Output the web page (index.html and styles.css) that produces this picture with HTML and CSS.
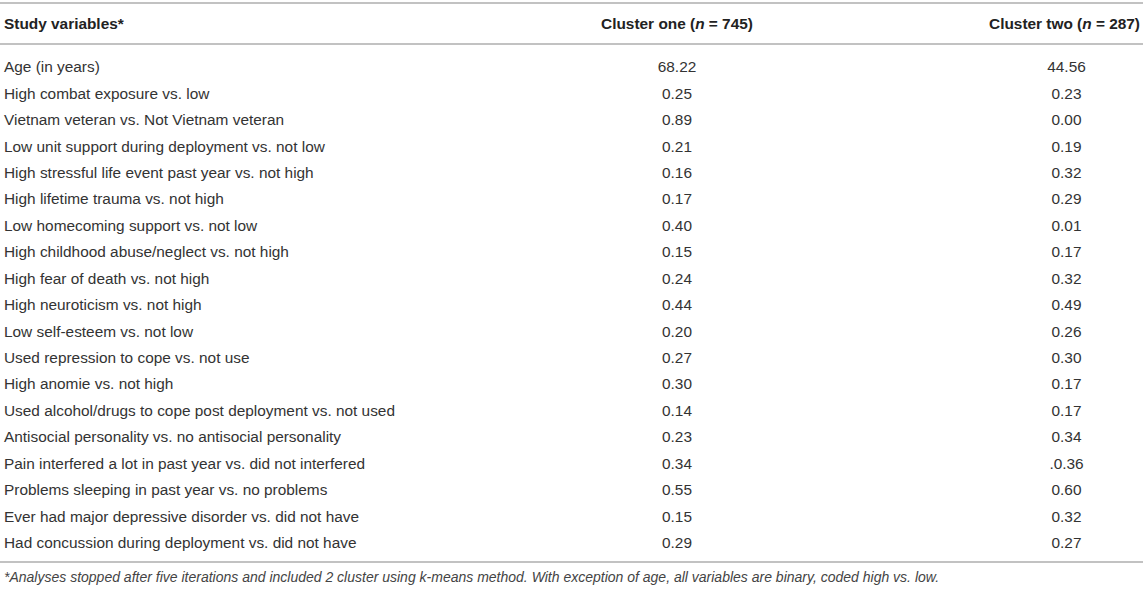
FILE: index.html
```html
<!DOCTYPE html>
<html lang="en">
<head>
  <meta charset="UTF-8" />
  <title>Cluster characteristics</title>
  <link rel="stylesheet" href="styles.css">
</head>
<body>

<table class="data-table">
  <thead>
    <tr>
      <th class="col-var">Study variables*</th>
      <th class="col-one">Cluster one (<i>n</i> = 745)</th>
      <th class="col-two">Cluster two (<i>n</i> = 287)</th>
    </tr>
  </thead>
  <tbody>
    <tr><td>Age (in years)</td><td class="num">68.22</td><td class="num two">44.56</td></tr>
    <tr><td>High combat exposure vs. low</td><td class="num">0.25</td><td class="num two">0.23</td></tr>
    <tr><td>Vietnam veteran vs. Not Vietnam veteran</td><td class="num">0.89</td><td class="num two">0.00</td></tr>
    <tr><td>Low unit support during deployment vs. not low</td><td class="num">0.21</td><td class="num two">0.19</td></tr>
    <tr><td>High stressful life event past year vs. not high</td><td class="num">0.16</td><td class="num two">0.32</td></tr>
    <tr><td>High lifetime trauma vs. not high</td><td class="num">0.17</td><td class="num two">0.29</td></tr>
    <tr><td>Low homecoming support vs. not low</td><td class="num">0.40</td><td class="num two">0.01</td></tr>
    <tr><td>High childhood abuse/neglect vs. not high</td><td class="num">0.15</td><td class="num two">0.17</td></tr>
    <tr><td>High fear of death vs. not high</td><td class="num">0.24</td><td class="num two">0.32</td></tr>
    <tr><td>High neuroticism vs. not high</td><td class="num">0.44</td><td class="num two">0.49</td></tr>
    <tr><td>Low self-esteem vs. not low</td><td class="num">0.20</td><td class="num two">0.26</td></tr>
    <tr><td>Used repression to cope vs. not use</td><td class="num">0.27</td><td class="num two">0.30</td></tr>
    <tr><td>High anomie vs. not high</td><td class="num">0.30</td><td class="num two">0.17</td></tr>
    <tr><td>Used alcohol/drugs to cope post deployment vs. not used</td><td class="num">0.14</td><td class="num two">0.17</td></tr>
    <tr><td>Antisocial personality vs. no antisocial personality</td><td class="num">0.23</td><td class="num two">0.34</td></tr>
    <tr><td>Pain interfered a lot in past year vs. did not interfered</td><td class="num">0.34</td><td class="num two">.0.36</td></tr>
    <tr><td>Problems sleeping in past year vs. no problems</td><td class="num">0.55</td><td class="num two">0.60</td></tr>
    <tr><td>Ever had major depressive disorder vs. did not have</td><td class="num">0.15</td><td class="num two">0.32</td></tr>
    <tr><td>Had concussion during deployment vs. did not have</td><td class="num">0.29</td><td class="num two">0.27</td></tr>
  </tbody>
</table>

<p class="footnote">*Analyses stopped after five iterations and included 2 cluster using k-means method. With exception of age, all variables are binary, coded high vs. low.</p>

</body>
</html>
```

FILE: styles.css
```css
body {
  margin: 0;
  font-family: "Liberation Sans", Arial, sans-serif;
  color: #333;
  background: #fff;
}
.data-table {
  width: 1143px;
  border-collapse: collapse;
  table-layout: fixed;
  margin-top: 2px;
  font-size: 15.4px;
}
.data-table thead tr {
  border-top: 2px solid #c2c2c2;
  border-bottom: 2px solid #c2c2c2;
}
.data-table th {
  font-weight: 700;
  color: #222;
  height: 39px;
  padding: 0 4px;
  white-space: nowrap;
}
.col-var {
  width: 412px;
  text-align: left;
}
.col-one {
  width: 506px;
  text-align: center;
}
.data-table th.col-two {
  text-align: right;
  padding-right: 3px;
}
.data-table tbody tr:first-child td {
  padding-top: 9px;
}
.data-table tbody tr:last-child td {
  padding-bottom: 5px;
}
.data-table tbody tr:last-child {
  border-bottom: 2px solid #c2c2c2;
}
.data-table td {
  height: 26.44px;
  padding: 0 4px;
  white-space: nowrap;
}
.num {
  text-align: center;
}
.num.two {
  padding-left: 60px;
}
.footnote {
  margin: 6px 0 0 4px;
  font-size: 14px;
  font-style: italic;
  color: #444;
}
```
